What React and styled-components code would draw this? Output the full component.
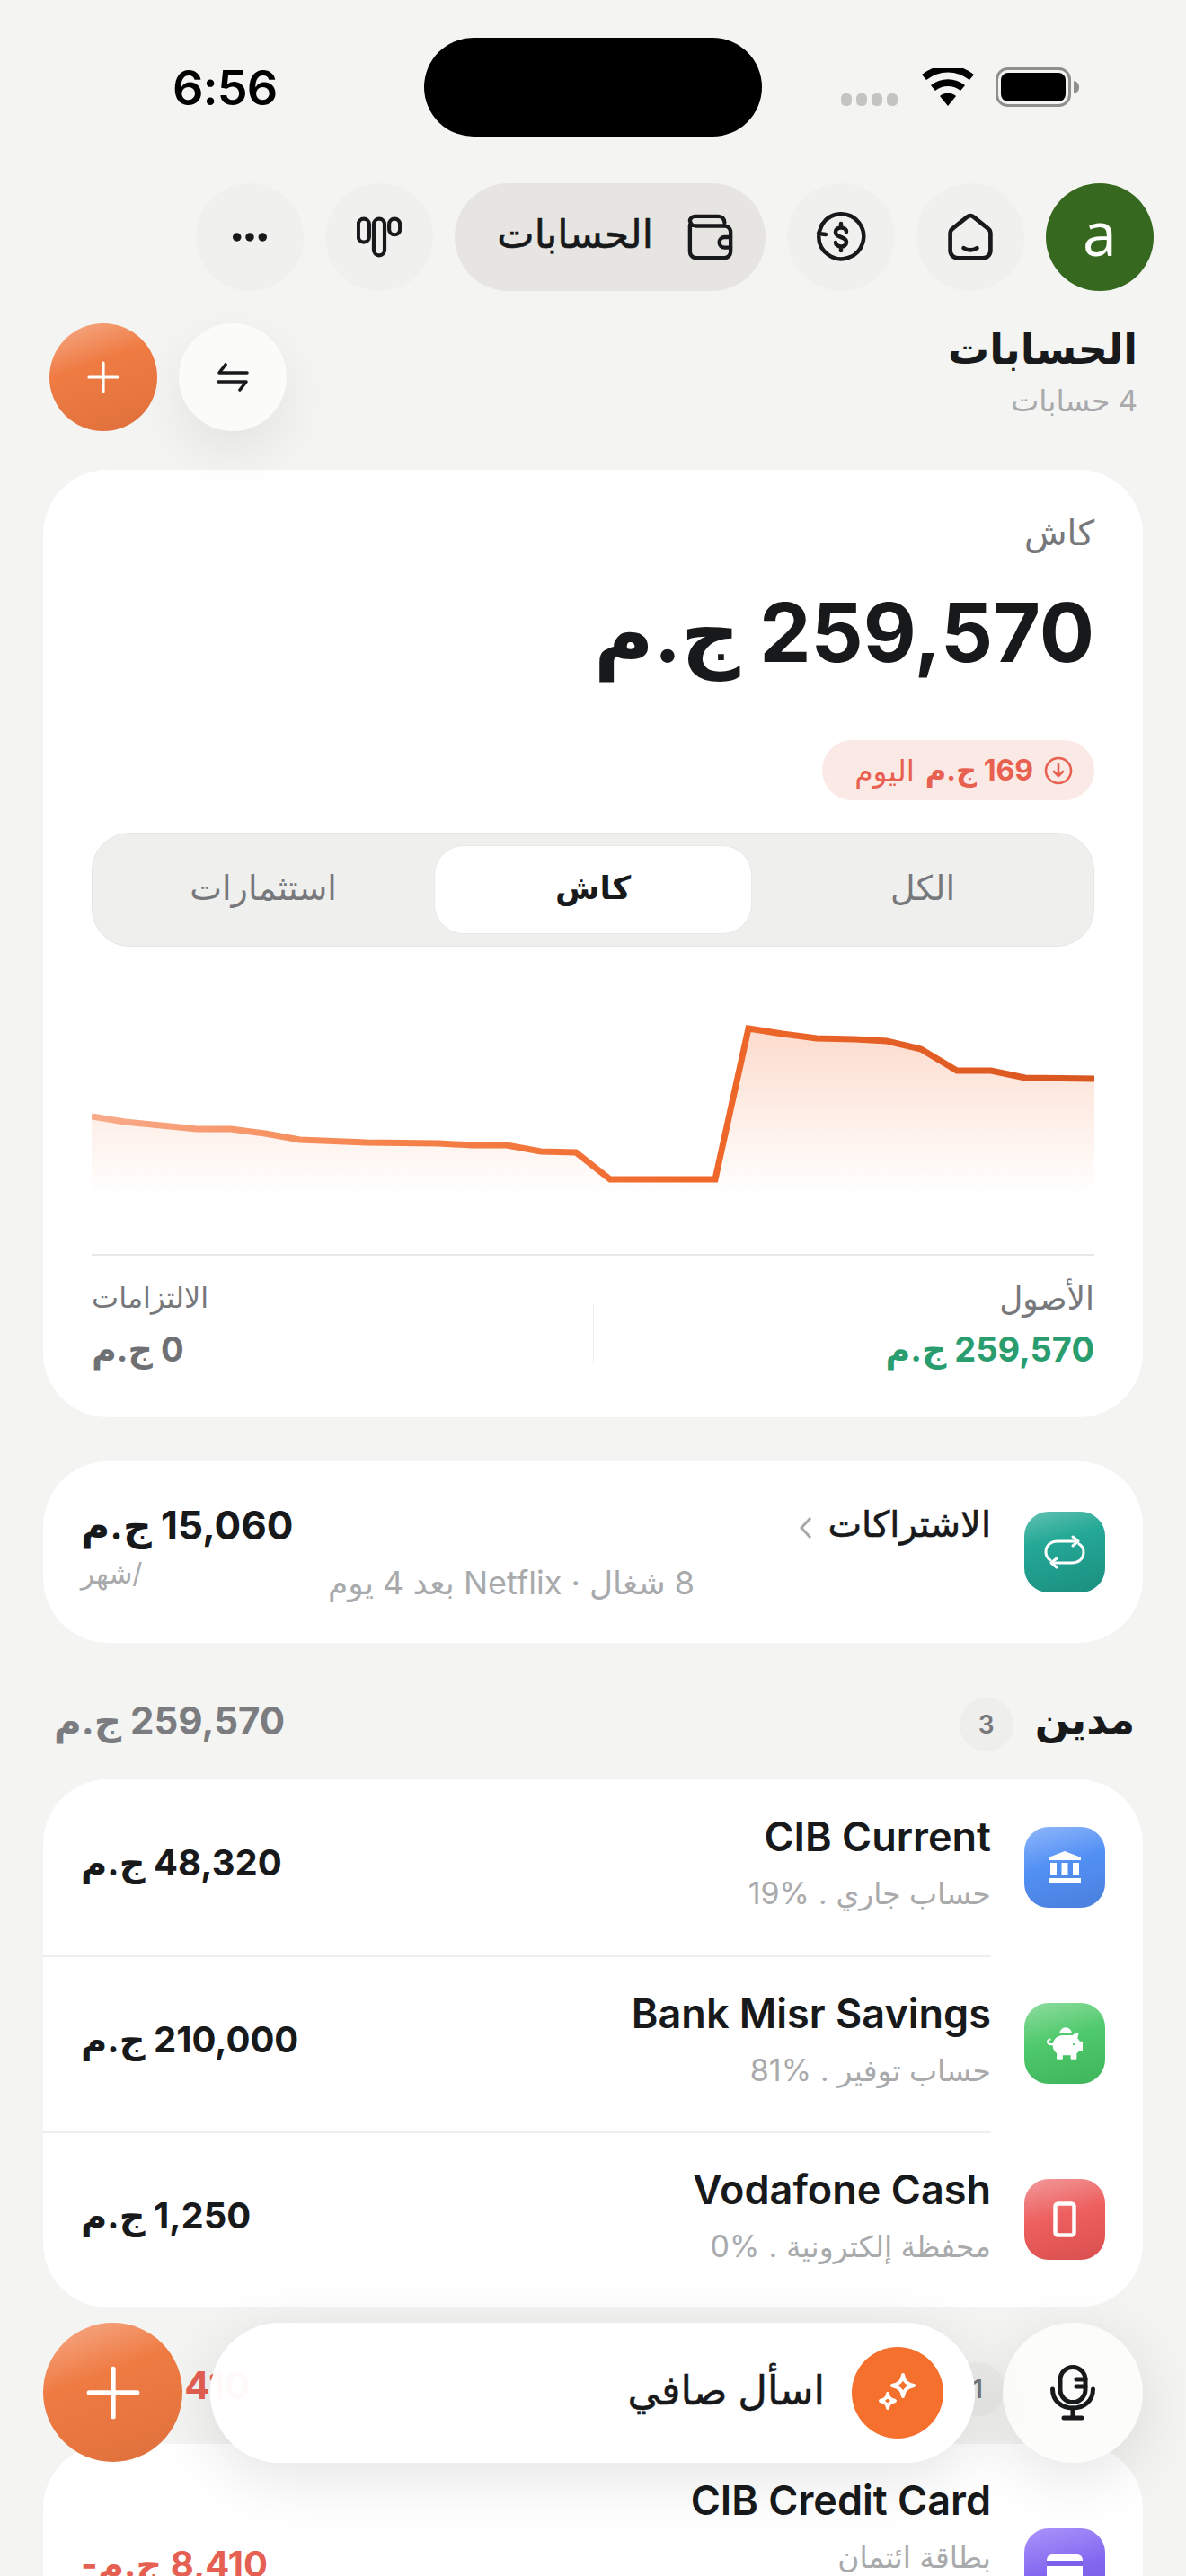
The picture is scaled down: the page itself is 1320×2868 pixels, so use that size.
import React from "react";
import styled, { createGlobalStyle } from "styled-components";
import { FaPiggyBank } from "react-icons/fa";

const GlobalStyle = createGlobalStyle`
  * {
    box-sizing: border-box;
  }

  html,
  body {
    margin: 0;
    padding: 0;
    background: #f4f4f2;
    font-family: Inter, "DejaVu Sans", sans-serif;
    color: #18191b;
  }
`;

const CHART_POINTS = [
  [102, 1243], [139, 1249], [179, 1253], [219, 1257], [257, 1257],
  [295, 1262], [334, 1269], [408, 1272], [488, 1273], [526, 1275],
  [564, 1275], [602, 1282], [641, 1283], [679, 1313], [796, 1313],
  [833, 1145], [871, 1151], [909, 1156], [951, 1157], [987, 1159],
  [1025, 1168], [1065, 1192], [1103, 1192], [1141, 1200], [1218, 1201],
];

const ACCOUNTS = [
  { name: "CIB Current", meta: "حساب جاري", share: "19%", value: "48,320", tone: "blue", icon: "bank" },
  { name: "Bank Misr Savings", meta: "حساب توفير", share: "81%", value: "210,000", tone: "green", icon: "piggy" },
  { name: "Vodafone Cash", meta: "محفظة إلكترونية", share: "0%", value: "1,250", tone: "red", icon: "phone" },
];

const TONES = {
  teal: "linear-gradient(165deg, #62c2b2 0%, #25a896 35%, #1a8f80 100%)",
  blue: "linear-gradient(165deg, #8fb6fb 0%, #5290f4 45%, #4a7fdc 100%)",
  green: "linear-gradient(165deg, #8fdc9e 0%, #4ec96b 45%, #3fb45c 100%)",
  red: "linear-gradient(165deg, #f29a9a 0%, #ee5f5f 45%, #d94f4f 100%)",
  purple: "linear-gradient(165deg, #ab94fa 0%, #8467f0 50%, #7658de 100%)",
};

function WifiIcon() {
  return (
    <svg width="58" height="42" viewBox="0 0 58 42">
      <path d="M29 42 20 31a14 14 0 0 1 18 0z" fill="#000" />
      <path d="M15 25a22 22 0 0 1 28 0l5-6a30 30 0 0 0-38 0z" fill="#000" />
      <path d="M5 13a38 38 0 0 1 48 0l5-6A46 46 0 0 0 0 7z" fill="#000" />
    </svg>
  );
}

function BatteryIcon() {
  return (
    <svg width="94" height="44" viewBox="0 0 94 44">
      <rect x="1.5" y="1.5" width="81" height="41" rx="12" fill="none" stroke="#8f8f8d" strokeWidth="3" />
      <rect x="6" y="6" width="72" height="32" rx="8" fill="#000" />
      <path d="M87 15c4 1 6 3 6 7s-2 6-6 7z" fill="#8f8f8d" />
    </svg>
  );
}

function HomeIcon() {
  return (
    <svg width="56" height="58" viewBox="0 0 60 60" fill="none" stroke="#18191b" strokeWidth="5" strokeLinecap="round" strokeLinejoin="round">
      <path d="M6 25c0-2 .8-3.6 2.4-4.8L26 6a6.5 6.5 0 0 1 8 0l17.6 14.2c1.600 1.200 2.400 2.800 2.400 4.800v21a9 9 0 0 1-9 9H15a9 9 0 0 1-9-9z" />
      <path d="M22 43q8 5 16 0" />
    </svg>
  );
}

function DollarIcon() {
  return (
    <svg width="60" height="60" viewBox="0 0 60 60" fill="none" stroke="#18191b" strokeWidth="4.500" strokeLinecap="round" strokeLinejoin="round">
      <path d="M9 16A25 25 0 1 1 5.200 29" />
      <path d="M9 16 5 26l8 1" />
      <path d="M36 24c0-3-3-4.500-6-4.500s-6 1.500-6 5 3 4.500 6 5.500 6 2 6 5.500-3 5-6 5-6-2-6-4.500M30 15v4M30 41v4" />
    </svg>
  );
}

function WalletIcon() {
  return (
    <svg width="52" height="52" viewBox="0 0 54 54" fill="none" stroke="#18191b" strokeWidth="4.500" strokeLinecap="round" strokeLinejoin="round">
      <path d="M3 13v31a7 7 0 0 0 7 7h33a7 7 0 0 0 7-7V21a7 7 0 0 0-7-7H10a7 7 0 0 1-7-6 6 6 0 0 1 6-5h27a7 7 0 0 1 7 7" />
      <path d="M50 27h-7a5.500 5.500 0 0 0 0 12h7" />
    </svg>
  );
}

function StatsIcon() {
  return (
    <svg width="50" height="46" viewBox="0 0 54 48" fill="none" stroke="#18191b" strokeWidth="4.500">
      <rect x="2" y="2" width="13" height="28" rx="6.500" />
      <rect x="20.500" y="2" width="13" height="44" rx="6.500" />
      <rect x="39" y="2" width="13" height="19" rx="6.500" />
    </svg>
  );
}

function MoreIcon() {
  return (
    <svg width="40" height="12" viewBox="0 0 42 12" fill="#18191b">
      <circle cx="6" cy="6" r="5" />
      <circle cx="21" cy="6" r="5" />
      <circle cx="36" cy="6" r="5" />
    </svg>
  );
}

function PlusIcon({ size }) {
  return (
    <svg width={size} height={size} viewBox="0 0 36 36" stroke="#fff" strokeWidth="3.200" strokeLinecap="round">
      <path d="M18 2v32M2 18h32" />
    </svg>
  );
}

function SwapIcon() {
  return (
    <svg width="36" height="34" viewBox="0 0 36 34" fill="none" stroke="#18191b" strokeWidth="3.600" strokeLinecap="round" strokeLinejoin="round">
      <path d="M34 12H3l7-9" />
      <path d="M2 22h31l-7 9" />
    </svg>
  );
}

function DownCircleIcon() {
  return (
    <svg width="32" height="32" viewBox="0 0 32 32" fill="none" stroke="#e8604f" strokeWidth="2.600" strokeLinecap="round" strokeLinejoin="round">
      <circle cx="16" cy="16" r="14" />
      <path d="M16 9v13M11 17l5 5 5-5" />
    </svg>
  );
}

function RepeatIcon() {
  return (
    <svg width="48" height="40" viewBox="0 0 48 40" fill="none" stroke="#fff" strokeWidth="3" strokeLinecap="round" strokeLinejoin="round">
      <path d="M38 8H16C8 8 3 13 3 20c0 4 2 7 5 9" />
      <path d="M33 3l6 5-6 5" />
      <path d="M10 32h22c8 0 13-5 13-12 0-4-2-7-5-9" />
      <path d="M15 27l-6 5 6 5" />
    </svg>
  );
}

function BankIcon() {
  return (
    <svg width="40" height="40" viewBox="0 0 40 40" fill="#fff">
      <path d="M20 2 38 9v3H2V9z" />
      <rect x="4" y="15" width="7" height="14" />
      <rect x="16.500" y="15" width="7" height="14" />
      <rect x="29" y="15" width="7" height="14" />
      <rect x="2" y="32" width="36" height="5" />
    </svg>
  );
}

function PhoneIcon() {
  return (
    <svg width="26" height="40" viewBox="0 0 26 40" fill="none" stroke="#fff" strokeWidth="4.500">
      <rect x="2.500" y="2.500" width="21" height="35" rx="3" />
    </svg>
  );
}

function CardIcon() {
  return (
    <svg width="40" height="32" viewBox="0 0 40 32">
      <rect x="0" y="0" width="40" height="32" rx="6" fill="#fff" />
      <rect x="0" y="7" width="40" height="6" fill="#7c5fe8" />
    </svg>
  );
}

function MicIcon() {
  return (
    <svg width="50" height="62" viewBox="0 0 50 62" fill="none" stroke="#18191b" strokeWidth="5" strokeLinecap="round" strokeLinejoin="round">
      <rect x="11" y="2.500" width="28" height="39" rx="14" />
      <path d="M29 16h10M29 24h10" />
      <path d="M2.500 27c0 13 10 21 22.500 21s22.500-8 22.500-21" />
      <path d="M25 48v10M15 59h20" />
    </svg>
  );
}

function SparkleIcon() {
  return (
    <svg width="46" height="46" viewBox="0 0 46 46" fill="none" stroke="#fff" strokeWidth="4" strokeLinejoin="round">
      <path d="M29 3c1 7 4 10 12 12-8 2-11 5-12 12-1-7-4-10-12-12 8-2 11-5 12-12z" />
      <path d="M12 24c.6 4.500 2.500 6.400 8 8-5.500 1.600-7.400 3.500-8 8-.6-4.500-2.500-6.400-8-8 5.500-1.600 7.400-3.500 8-8z" />
    </svg>
  );
}

function AccountGlyph({ icon }) {
  if (icon === "bank") return <BankIcon />;
  if (icon === "piggy") return <FaPiggyBank size={40} color="#fff" />;
  if (icon === "phone") return <PhoneIcon />;
  return <CardIcon />;
}

function BalanceChart() {
  const line = CHART_POINTS.map(([x, y]) => `${x},${y}`).join(" ");
  const area = `102,1330 ${line} 1218,1330`;
  return (
    <ChartBox viewBox="102 1130 1116 210" width="1116" height="210">
      <defs>
        <linearGradient id="chartFill" gradientUnits="userSpaceOnUse" x1="0" y1="1145" x2="0" y2="1330">
          <stop offset="0" stopColor="#f36b2d" stopOpacity="0.24" />
          <stop offset="1" stopColor="#f36b2d" stopOpacity="0" />
        </linearGradient>
        <linearGradient id="chartLine" gradientUnits="userSpaceOnUse" x1="102" y1="0" x2="1218" y2="0">
          <stop offset="0" stopColor="#f9ab8b" />
          <stop offset="0.3" stopColor="#f5824a" />
          <stop offset="0.6" stopColor="#f0682b" />
          <stop offset="1" stopColor="#d8561f" />
        </linearGradient>
      </defs>
      <polygon points={area} fill="url(#chartFill)" />
      <polyline points={line} fill="none" stroke="url(#chartLine)" strokeWidth="7" strokeLinejoin="miter" />
    </ChartBox>
  );
}

export default function App() {
  return (
    <>
      <GlobalStyle />
      <Page dir="rtl">
        <StatusBar dir="ltr">
          <StatusTime>6:56</StatusTime>
          <Island />
          <SignalDots>
            <i />
            <i />
            <i />
            <i />
          </SignalDots>
          <StatusIcons>
            <WifiIcon />
            <BatteryIcon />
          </StatusIcons>
        </StatusBar>

        <NavRow>
          <Avatar>a</Avatar>
          <NavCircle><HomeIcon /></NavCircle>
          <NavCircle><DollarIcon /></NavCircle>
          <NavPill>
            <WalletIcon />
            <NavPillLabel>الحسابات</NavPillLabel>
          </NavPill>
          <NavCircle><StatsIcon /></NavCircle>
          <NavCircle><MoreIcon /></NavCircle>
        </NavRow>

        <PageHeader>
          <div>
            <PageTitle>الحسابات</PageTitle>
            <PageSub>4 حسابات</PageSub>
          </div>
          <HeaderActions>
            <SwapButton><SwapIcon /></SwapButton>
            <OrangeButton $size={120}><PlusIcon size={36} /></OrangeButton>
          </HeaderActions>
        </PageHeader>

        <BalanceCard>
          <BalanceLabel>كاش</BalanceLabel>
          <BalanceAmount>259,570 ج.م</BalanceAmount>
          <ChipRow>
            <ChangeChip>
              <DownCircleIcon />
              <b>169 ج.م</b>
              <span>اليوم</span>
            </ChangeChip>
          </ChipRow>
          <Tabs>
            <Tab>الكل</Tab>
            <Tab $active>كاش</Tab>
            <Tab>استثمارات</Tab>
          </Tabs>
          <BalanceChart />
          <CardDivider />
          <Totals>
            <TotalCell>
              <TotalLabel>الأصول</TotalLabel>
              <TotalValue $color="#2a9d6f">259,570 ج.م</TotalValue>
            </TotalCell>
            <TotalRule />
            <TotalCell $end>
              <TotalLabel $size={32}>الالتزامات</TotalLabel>
              <TotalValue $color="#6f7074">0 ج.م</TotalValue>
            </TotalCell>
          </Totals>
        </BalanceCard>

        <SubscriptionCard>
          <AccountIcon $tone="teal"><RepeatIcon /></AccountIcon>
          <SubscriptionText>
            <SubscriptionTitle>
              الاشتراكات
              <Chevron viewBox="0 0 16 28" width="16" height="28">
                <path d="M13 3 3 14l10 11" fill="none" stroke="#a8a9ab" strokeWidth="3" />
              </Chevron>
            </SubscriptionTitle>
            <SubscriptionMeta>8 شغال · Netflix بعد 4 يوم</SubscriptionMeta>
          </SubscriptionText>
          <SubscriptionAmount>
            <SubscriptionValue>15,060 ج.م</SubscriptionValue>
            <PerMonth>/شهر</PerMonth>
          </SubscriptionAmount>
        </SubscriptionCard>

        <SectionHeader>
          <SectionName>مدين</SectionName>
          <CountBadge>3</CountBadge>
          <SectionTotal>259,570 ج.م</SectionTotal>
        </SectionHeader>

        <AccountsCard>
          {ACCOUNTS.map((account, index) => (
            <AccountRow key={account.name}>
              <AccountIcon $tone={account.tone}>
                <AccountGlyph icon={account.icon} />
              </AccountIcon>
              <AccountBody $divider={index > 0}>
                <AccountInfo>
                  <AccountName>{account.name}</AccountName>
                  <AccountMeta>
                    {account.meta}
                    <MetaDot>.</MetaDot>
                    <MetaShare dir="ltr">{account.share}</MetaShare>
                  </AccountMeta>
                </AccountInfo>
                <AccountValue>{account.value} ج.م</AccountValue>
              </AccountBody>
            </AccountRow>
          ))}
        </AccountsCard>

        <SectionHeader $gap={44}>
          <SectionName>دائنة</SectionName>
          <CountBadge>1</CountBadge>
          <SectionTotal $color="#e55f52">8,410 ج.م-</SectionTotal>
        </SectionHeader>

        <AccountsCard>
          <AccountRow $tall>
            <AccountIcon $tone="purple"><CardIcon /></AccountIcon>
            <AccountBody>
              <AccountInfo $top>
                <AccountName>CIB Credit Card</AccountName>
                <AccountMeta>بطاقة ائتمان</AccountMeta>
              </AccountInfo>
              <AccountValue $color="#e55f52">8,410 ج.م-</AccountValue>
            </AccountBody>
          </AccountRow>
        </AccountsCard>

        <BottomBar>
          <MicButton><MicIcon /></MicButton>
          <AskPill>
            <AskSpark><SparkleIcon /></AskSpark>
            <AskLabel>اسأل صافي</AskLabel>
          </AskPill>
          <OrangeButton $size={155}><PlusIcon size={60} /></OrangeButton>
        </BottomBar>
      </Page>
    </>
  );
}

const Page = styled.div`
  position: relative;
  width: 1320px;
  height: 2868px;
  overflow: hidden;
  background: #f4f4f2;
`;

const StatusBar = styled.div`
  height: 204px;
  padding: 42px 0 0 192px;
  display: flex;
  align-items: flex-start;
`;

const StatusTime = styled.div`
  width: 120px;
  height: 110px;
  display: flex;
  align-items: center;
  font-size: 54px;
  font-weight: 600;
  color: #000;
  letter-spacing: -1px;
`;

const Island = styled.div`
  width: 376px;
  height: 110px;
  margin-left: 160px;
  border-radius: 55px;
  background: #000;
`;

const SignalDots = styled.div`
  display: flex;
  gap: 5px;
  margin: 62px 0 0 88px;

  i {
    width: 12px;
    height: 14px;
    border-radius: 5px;
    background: #c4c4c2;
  }
`;

const StatusIcons = styled.div`
  display: flex;
  align-items: center;
  gap: 24px;
  margin: 33px 0 0 27px;
`;

const NavRow = styled.div`
  height: 120px;
  padding-right: 36px;
  display: flex;
  gap: 24px;
`;

const Avatar = styled.div`
  width: 120px;
  height: 120px;
  padding-bottom: 12px;
  border-radius: 50%;
  background: #36691f;
  color: #fff;
  display: flex;
  justify-content: center;
  align-items: center;
  font-size: 68px;
  font-weight: 400;
  font-family: "Open Sans", sans-serif;
`;

const NavCircle = styled.div`
  width: 120px;
  height: 120px;
  border-radius: 50%;
  background: #f0f0ee;
  display: flex;
  justify-content: center;
  align-items: center;
`;

const NavPill = styled.div`
  width: 346px;
  height: 120px;
  padding-right: 35px;
  border-radius: 60px;
  background: #e6e5e1;
  display: flex;
  align-items: center;
  gap: 38px;
`;

const NavPillLabel = styled.span`
  margin-bottom: 8px;
  font-size: 44px;
  font-weight: 500;
  -webkit-text-stroke: 0.6px #18191b;
`;

const PageHeader = styled.div`
  height: 120px;
  margin-top: 36px;
  padding: 0 54px 0 55px;
  display: flex;
  justify-content: space-between;
`;

const PageTitle = styled.div`
  font-size: 46px;
  font-weight: 700;
  line-height: 56px;
`;

const PageSub = styled.div`
  margin-top: 12px;
  font-size: 33px;
  line-height: 36px;
  color: #a9aaac;
`;

const HeaderActions = styled.div`
  display: flex;
  gap: 24px;
`;

const SwapButton = styled.div`
  width: 120px;
  height: 120px;
  border-radius: 50%;
  background: #fbfbfa;
  box-shadow: 0 24px 60px rgba(0, 0, 0, 0.07);
  display: flex;
  justify-content: center;
  align-items: center;
`;

const OrangeButton = styled.div`
  width: ${(props) => props.$size}px;
  height: ${(props) => props.$size}px;
  border-radius: 50%;
  background: linear-gradient(160deg, #f6ad8c 0%, #ef7b43 38%, #df703c 100%);
  display: flex;
  justify-content: center;
  align-items: center;
  flex-shrink: 0;
`;

const BalanceCard = styled.section`
  height: 1055px;
  margin: 43px 48px 0;
  padding: 0 54px;
  border-radius: 72px;
  background: #fff;
`;

const BalanceLabel = styled.div`
  padding-top: 50px;
  font-size: 39px;
  line-height: 40px;
  color: #77787c;
`;

const BalanceAmount = styled.div`
  margin-top: 41px;
  height: 100px;
  font-size: 91px;
  line-height: 100px;
  font-weight: 700;
  white-space: nowrap;
`;

const ChipRow = styled.div`
  margin-top: 70px;
  display: flex;
`;

const ChangeChip = styled.div`
  height: 67px;
  width: 303px;
  padding: 0 24px;
  border-radius: 34px;
  background: #fbe9e6;
  color: #e8604f;
  display: flex;
  align-items: center;
  gap: 12px;
  font-size: 33px;
  white-space: nowrap;

  b {
    font-weight: 700;
    font-size: 32px;
  }
`;

const Tabs = styled.div`
  height: 127px;
  margin-top: 36px;
  padding: 13px 0;
  border: 1px solid #e6e6e4;
  border-radius: 42px;
  background: #efefed;
  display: grid;
  grid-template-columns: 380px 354px 1fr;
`;

const Tab = styled.div`
  padding-bottom: 6px;
  display: flex;
  justify-content: center;
  align-items: center;
  border-radius: 33px;
  font-size: ${(props) => (props.$active ? 36 : 38)}px;
  font-weight: ${(props) => (props.$active ? 700 : 500)};
  color: ${(props) => (props.$active ? "#18191b" : "#77787c")};
  background: ${(props) => (props.$active ? "#fff" : "transparent")};
  border: ${(props) => (props.$active ? "1px solid #e8e8e6" : "none")};
`;

const ChartBox = styled.svg`
  display: block;
  margin-top: 76px;
`;

const CardDivider = styled.div`
  height: 2px;
  margin-top: 56px;
  background: #e8e8e6;
`;

const Totals = styled.div`
  display: flex;
  padding-top: 27px;
`;

const TotalCell = styled.div`
  flex: 1;
  text-align: ${(props) => (props.$end ? "left" : "right")};
`;

const TotalRule = styled.div`
  width: 1px;
  height: 66px;
  margin-top: 27px;
  background: #ededeb;
`;

const TotalLabel = styled.div`
  font-size: ${(props) => props.$size || 36}px;
  line-height: 40px;
  color: #77787c;
`;

const TotalValue = styled.div`
  margin-top: 14px;
  font-size: 38px;
  line-height: 46px;
  font-weight: 700;
  color: ${(props) => props.$color};
`;

const SubscriptionCard = styled.section`
  height: 202px;
  margin: 49px 48px 0;
  padding: 0 42px;
  border-radius: 72px;
  background: #fff;
  display: flex;
  align-items: center;
  gap: 37px;
`;

const AccountIcon = styled.div`
  width: 90px;
  height: 90px;
  border-radius: 27px;
  background: ${(props) => TONES[props.$tone]};
  display: flex;
  justify-content: center;
  align-items: center;
  flex-shrink: 0;
`;

const SubscriptionText = styled.div`
  flex: 1;
`;

const SubscriptionTitle = styled.div`
  display: flex;
  align-items: center;
  gap: 16px;
  font-size: 40px;
  line-height: 46px;
  font-weight: 500;
  -webkit-text-stroke: 0.6px #18191b;
`;

const Chevron = styled.svg`
  margin-top: 8px;
`;

const SubscriptionMeta = styled.div`
  margin-top: 22px;
  padding-right: 330px;
  font-size: 36px;
  line-height: 40px;
  color: #a9aaac;
  white-space: nowrap;
`;

const SubscriptionAmount = styled.div`
  text-align: left;
  margin-bottom: 14px;
`;

const SubscriptionValue = styled.div`
  font-size: 44px;
  line-height: 50px;
  font-weight: 700;
  white-space: nowrap;
`;

const PerMonth = styled.div`
  margin-top: 12px;
  font-size: 31px;
  line-height: 34px;
  color: #a9aaac;
`;

const SectionHeader = styled.div`
  height: 60px;
  margin: 61px 57px 31px 60px;
  display: flex;
  align-items: center;
  gap: ${(props) => props.$gap || 24}px;
`;

const SectionName = styled.div`
  padding-bottom: 14px;
  font-size: 45px;
  font-weight: 700;
`;

const CountBadge = styled.div`
  width: 60px;
  height: 60px;
  border-radius: 50%;
  background: #eeeeec;
  color: #77787c;
  display: flex;
  justify-content: center;
  align-items: center;
  font-size: 28px;
  font-weight: 600;
`;

const SectionTotal = styled.div`
  margin-right: auto;
  padding-bottom: 10px;
  font-size: 42px;
  font-weight: 700;
  color: ${(props) => props.$color || "#7b7c80"};
`;

const AccountsCard = styled.section`
  margin: 0 48px;
  border-radius: 72px;
  background: #fff;
  overflow: hidden;
`;

const AccountRow = styled.div`
  height: ${(props) => (props.$tall ? 278 : 196)}px;
  padding-right: 42px;
  display: flex;
  align-items: center;
  gap: 37px;
`;

const AccountBody = styled.div`
  flex: 1;
  align-self: stretch;
  padding-left: 42px;
  display: flex;
  justify-content: space-between;
  align-items: center;
  border-top: ${(props) => (props.$divider ? "2px solid #eeeeec" : "none")};
`;

const AccountInfo = styled.div`
  display: flex;
  flex-direction: column;
  gap: 15px;
  padding-bottom: 13px;
  align-self: ${(props) => (props.$top ? "flex-start" : "center")};
  padding-top: ${(props) => (props.$top ? 35 : 0)}px;
`;

const AccountName = styled.div`
  font-size: 45px;
  line-height: 56px;
  font-weight: 600;
  white-space: nowrap;
`;

const AccountMeta = styled.div`
  font-size: 33px;
  line-height: 40px;
  color: #a9aaac;
  white-space: nowrap;
`;

const MetaDot = styled.span`
  margin: 0 10px;
`;

const MetaShare = styled.bdi`
  font-size: 34px;
`;

const AccountValue = styled.div`
  padding-bottom: 10px;
  font-size: 40px;
  line-height: 50px;
  font-weight: 700;
  color: ${(props) => props.$color || "#18191b"};
  white-space: nowrap;
`;

const BottomBar = styled.div`
  position: absolute;
  left: 48px;
  right: 48px;
  top: 2586px;
  display: flex;
  gap: 31px;
`;

const MicButton = styled.div`
  width: 156px;
  height: 156px;
  border-radius: 50%;
  background: #fcfcfb;
  box-shadow: 0 16px 70px rgba(0, 0, 0, 0.11);
  display: flex;
  justify-content: center;
  align-items: center;
  flex-shrink: 0;
`;

const AskPill = styled.div`
  flex: 1;
  height: 156px;
  padding-right: 35px;
  border-radius: 78px;
  background: rgba(255, 255, 255, 0.97);
  box-shadow: 0 16px 70px rgba(0, 0, 0, 0.11);
  display: flex;
  align-items: center;
  gap: 30px;
`;

const AskLabel = styled.span`
  margin-bottom: 8px;
  font-size: 45px;
  font-weight: 500;
  -webkit-text-stroke: 0.5px #18191b;
`;

const AskSpark = styled.div`
  width: 102px;
  height: 102px;
  border-radius: 50%;
  background: #f56f2d;
  display: flex;
  justify-content: center;
  align-items: center;
`;
